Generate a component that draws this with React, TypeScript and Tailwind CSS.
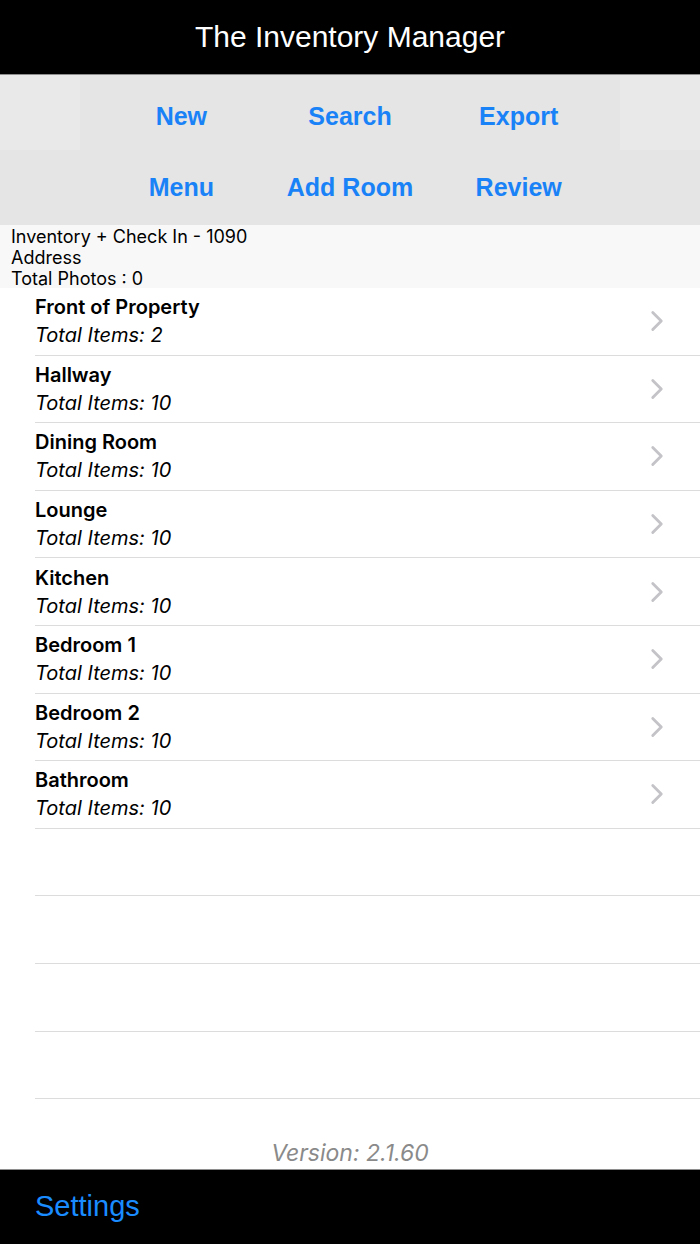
import { ChevronRight } from "lucide-react";

const ROOMS: { name: string; items: number }[] = [
  { name: "Front of Property", items: 2 },
  { name: "Hallway", items: 10 },
  { name: "Dining Room", items: 10 },
  { name: "Lounge", items: 10 },
  { name: "Kitchen", items: 10 },
  { name: "Bedroom 1", items: 10 },
  { name: "Bedroom 2", items: 10 },
  { name: "Bathroom", items: 10 },
];

const sf = { fontFamily: "Inter, 'Liberation Sans', sans-serif" };
const helv = { fontFamily: "'Liberation Sans', Arial, sans-serif" };

function ToolButton({ label }: { label: string }) {
  return (
    <button className="flex h-full items-center justify-center text-[25px] font-bold text-[#1a82f7]" style={helv}>
      {label}
    </button>
  );
}

export default function App() {
  return (
    <div className="flex h-[1244px] w-[700px] flex-col overflow-hidden bg-white" style={sf}>
      <header className="flex h-[75px] shrink-0 items-center justify-center border-b border-[#8e8e8e] bg-black pb-[1px]">
        <h1 className="text-[30px] text-white" style={helv}>
          The Inventory Manager
        </h1>
      </header>

      <nav className="shrink-0 bg-[#e5e5e5]">
        <div className="flex h-[75px]">
          <div className="w-[80px] bg-[#e9e9e9]" />
          <div className="flex flex-1 justify-center pt-[8px]">
            <div className="grid w-[506px] grid-cols-3">
              <ToolButton label="New" />
              <ToolButton label="Search" />
              <ToolButton label="Export" />
            </div>
          </div>
          <div className="w-[80px] bg-[#e9e9e9]" />
        </div>
        <div className="flex h-[75px] justify-center">
          <div className="grid w-[506px] grid-cols-3">
            <ToolButton label="Menu" />
            <ToolButton label="Add Room" />
            <ToolButton label="Review" />
          </div>
        </div>
      </nav>

      <section className="h-[63px] shrink-0 bg-[#f8f8f8] pl-[11px] pt-[1px] text-[18px] leading-[21px] text-black">
        <p>Inventory + Check In - 1090</p>
        <p>Address</p>
        <p>Total Photos : 0</p>
      </section>

      <ul className="flex-1">
        {ROOMS.map((room) => (
          <li key={room.name} className="flex h-[67.6px] items-center pl-[35px]">
            <div className="flex h-full flex-1 items-center border-b border-[#dcdcdc] pr-[26px]">
              <div className="flex flex-1 flex-col text-[20px] leading-[28px] text-black">
                <span className="font-semibold">{room.name}</span>
                <span className="italic">Total Items: {room.items}</span>
              </div>
              <ChevronRight className="h-[34px] w-[34px] text-[#c4c4c8]" strokeWidth={2} />
            </div>
          </li>
        ))}
        {[0, 1, 2, 3].map((i) => (
          <li key={i} className="h-[67.6px] pl-[35px]">
            <div className="h-full border-b border-[#dcdcdc]" />
          </li>
        ))}
      </ul>

      <p className="shrink-0 pb-[1px] text-center text-[23px] leading-[30px] italic text-[#8a8a8a]">Version: 2.1.60</p>

      <footer className="flex h-[75px] shrink-0 items-center border-t border-[#8e8e8e] bg-black pl-[35px]">
        <button className="text-[29px] text-[#1a8cff]" style={helv}>
          Settings
        </button>
      </footer>
    </div>
  );
}
